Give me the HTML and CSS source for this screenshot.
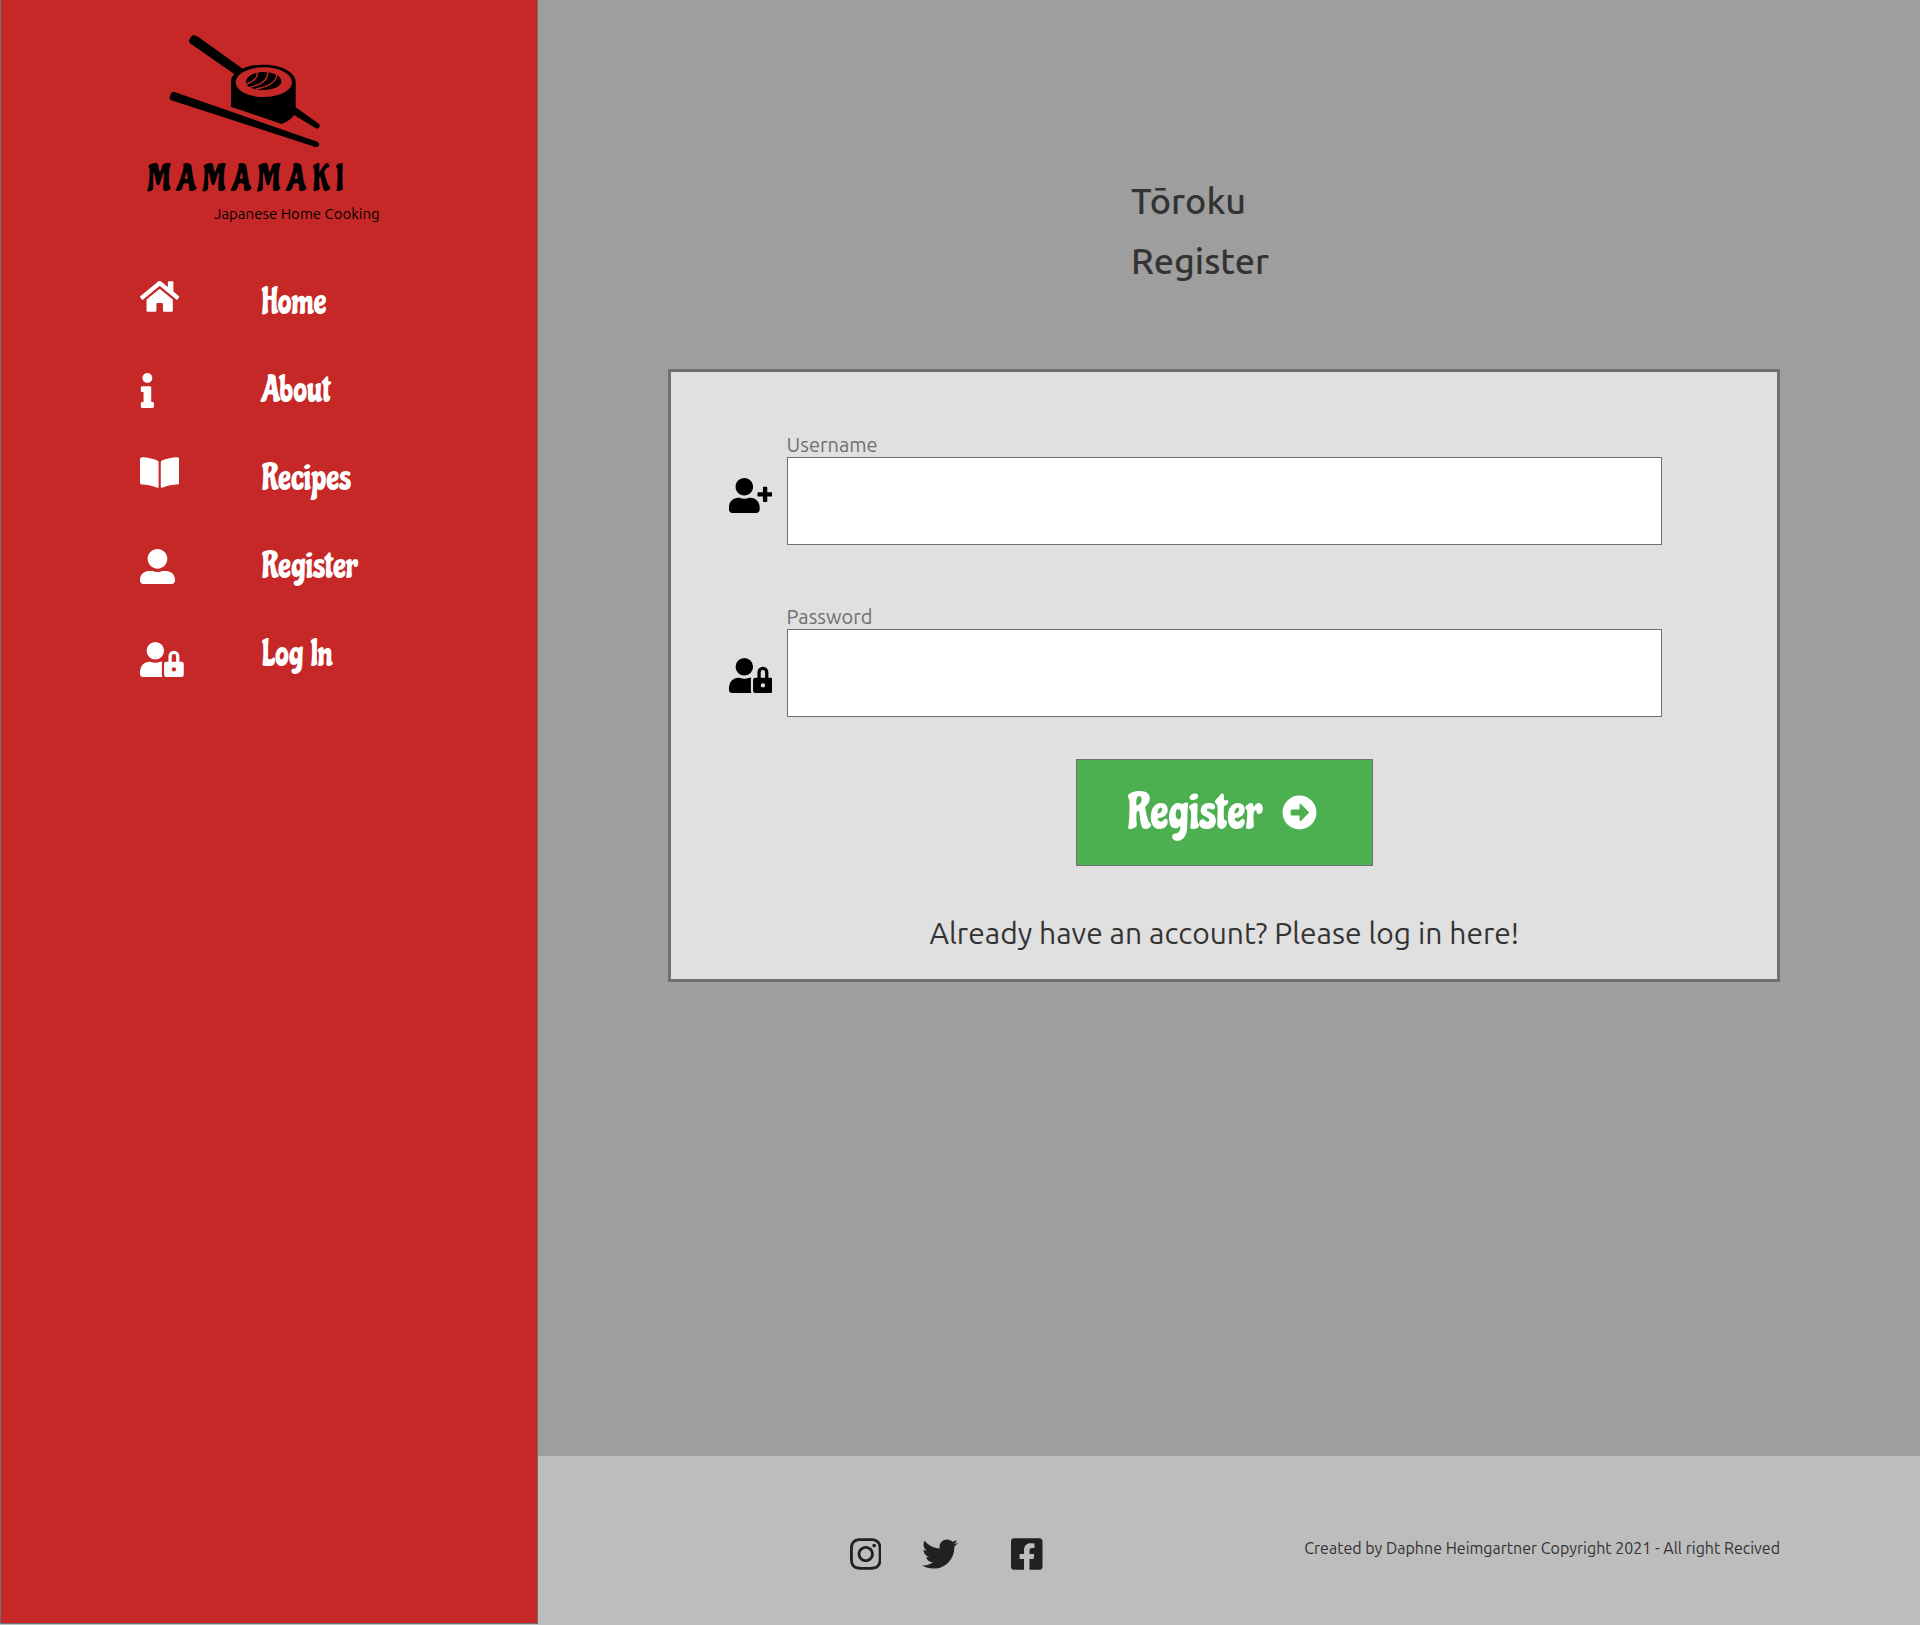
FILE: index.html
```html
<!DOCTYPE html>
<html lang="en">
<head>
<meta charset="utf-8">
<meta name="viewport" content="width=device-width, initial-scale=1">
<title>Mamamaki – Register</title>
<link rel="stylesheet" href="styles.css">
</head>
<body>
<div class="layout">
  <aside class="sidebar">
    <a class="brand" href="#">
      <svg class="brand-mark" viewBox="117 42 456 342" aria-hidden="true">
        <path d="M193 46Q187 44 183 50L178 60Q175 66 180 70L318 166L340 148L204 50Z"/>
        <path d="M497 262L566 311Q572 316 568 322Q563 328 556 324L486 281Z"/>
        <path d="M133 216Q126 214 123 220L119 231Q117 238 124 241L556 381Q564 383 567 376Q569 368 562 365Z"/>
        <path fill-rule="evenodd" d="M303 186C303 156 346 134 400 134S497 156 497 186V280Q482 302 455 312L303 260ZM317 187C317 212 354 231 401 231S486 212 486 187S448 142 401 142S317 162 317 187Z"/>
        <path d="M348 187C348 168 372 156 401 156S454 168 454 184S430 210 401 210S348 202 348 187Z"/>
        <g class="brand-grain">
          <path d="M381 154Q387 180 346 194"/>
          <path d="M413 154Q418 190 356 203"/>
          <path d="M440 160Q444 194 378 207"/>
        </g>
      </svg>
      <span class="brand-name">MAMAMAKI</span>
      <span class="brand-tagline">Japanese Home Cooking</span>
    </a>
    <nav>
      <ul class="nav-list">
        <li><a class="nav-link" href="#">
          <svg class="icon icon-top" viewBox="0 0 576 512" aria-hidden="true"><path d="M280.37 148.26L96 300.11V464a16 16 0 0 0 16 16l112.06-.29a16 16 0 0 0 15.92-16V368a16 16 0 0 1 16-16h64a16 16 0 0 1 16 16v95.64a16 16 0 0 0 16 16.05L464 480a16 16 0 0 0 16-16V300L295.67 148.26a12.19 12.19 0 0 0-15.3 0zM571.6 251.47L488 182.56V44.05a12 12 0 0 0-12-12h-56a12 12 0 0 0-12 12v72.61L318.47 43a48 48 0 0 0-61 0L4.34 251.47a12 12 0 0 0-1.6 16.9l25.5 31A12 12 0 0 0 45.15 301l235.22-193.74a12.19 12.19 0 0 1 15.3 0L530.9 301a12 12 0 0 0 16.9-1.6l25.5-31a12 12 0 0 0-1.7-16.93z"/></svg>
          <span>Home</span></a></li>
        <li><a class="nav-link" href="#">
          <svg class="icon" viewBox="-12 0 204 512" aria-hidden="true"><path d="M20 424.229h20V279.771H20c-11.046 0-20-8.954-20-20V212c0-11.046 8.954-20 20-20h112c11.046 0 20 8.954 20 20v212.229h20c11.046 0 20 8.954 20 20V492c0 11.046-8.954 20-20 20H20c-11.046 0-20-8.954-20-20v-47.771c0-11.046 8.954-20 20-20zM96 0C56.235 0 24 32.235 24 72s32.235 72 72 72 72-32.235 72-72S135.764 0 96 0z"/></svg>
          <span>About</span></a></li>
        <li><a class="nav-link" href="#">
          <svg class="icon icon-top" viewBox="0 0 576 512" aria-hidden="true"><path d="M542.22 32.05c-54.8 3.11-163.72 14.43-230.96 55.59-4.64 2.84-7.27 7.89-7.27 13.17v363.87c0 11.55 12.63 18.85 23.28 13.49 69.18-34.82 169.23-44.32 218.7-46.92 16.89-.89 30.02-14.43 30.02-30.66V62.75c.01-17.71-15.35-31.74-33.77-30.7zM264.73 87.64C197.5 46.48 88.58 35.17 33.78 32.05 15.36 31.01 0 45.04 0 62.75V400.6c0 16.24 13.13 29.78 30.02 30.66 49.49 2.6 149.59 12.11 218.77 46.95 10.62 5.35 23.21-1.94 23.21-13.46V100.63c0-5.29-2.62-10.14-7.27-12.99z"/></svg>
          <span>Recipes</span></a></li>
        <li><a class="nav-link" href="#">
          <svg class="icon" viewBox="0 0 512 512" aria-hidden="true"><path d="M256 288c79.5 0 144-64.5 144-144S335.5 0 256 0 112 64.5 112 144s64.5 144 144 144zm128 32h-55.1c-22.2 10.2-46.9 16-72.9 16s-50.6-5.8-72.9-16H128C57.3 320 0 377.3 0 448v16c0 26.5 21.5 48 48 48h416c26.5 0 48-21.5 48-48v-16c0-70.7-57.3-128-128-128z"/></svg>
          <span>Register</span></a></li>
        <li><a class="nav-link" href="#">
          <svg class="icon icon-bottom" viewBox="0 0 640 512" aria-hidden="true"><path d="M224 256A128 128 0 1 0 96 128a128 128 0 0 0 128 128zm96 64a63.08 63.08 0 0 1 8.1-30.5c-4.8-.5-9.5-1.5-14.5-1.5h-16.7a174.08 174.08 0 0 1-145.8 0h-16.7A134.43 134.43 0 0 0 0 422.4V464a48 48 0 0 0 48 48h280.9a63.54 63.54 0 0 1-8.9-32zm288-32h-32v-80a80 80 0 0 0-160 0v80h-32a32 32 0 0 0-32 32v160a32 32 0 0 0 32 32h224a32 32 0 0 0 32-32V320a32 32 0 0 0-32-32zM496 432a32 32 0 1 1 32-32 32 32 0 0 1-32 32zm32-144h-64v-80a32 32 0 0 1 64 0z"/></svg>
          <span>Log In</span></a></li>
      </ul>
    </nav>
  </aside>

  <div class="page">
    <main class="content">
      <h1 class="title"><span>Tōroku</span><span>Register</span></h1>
      <form class="card">
        <div class="field">
          <label class="field-label" for="username">Username</label>
          <svg class="icon field-icon icon-top" viewBox="0 0 640 512" aria-hidden="true"><path d="M624 208h-64v-64c0-8.8-7.2-16-16-16h-32c-8.8 0-16 7.2-16 16v64h-64c-8.8 0-16 7.2-16 16v32c0 8.8 7.2 16 16 16h64v64c0 8.8 7.2 16 16 16h32c8.8 0 16-7.2 16-16v-64h64c8.8 0 16-7.2 16-16v-32c0-8.8-7.2-16-16-16zm-400 48c70.7 0 128-57.3 128-128S294.7 0 224 0 96 57.3 96 128s57.3 128 128 128zm89.6 32h-16.7c-22.2 10.2-46.9 16-72.9 16s-50.6-5.8-72.9-16h-16.7C60.2 288 0 348.2 0 422.4V464c0 26.5 21.5 48 48 48h352c26.5 0 48-21.5 48-48v-41.6c0-74.2-60.2-134.4-134.4-134.4z"/></svg>
          <input class="field-input" id="username" type="text" autocomplete="username">
        </div>
        <div class="field">
          <label class="field-label" for="password">Password</label>
          <svg class="icon field-icon icon-bottom" viewBox="0 0 640 512" aria-hidden="true"><path d="M224 256A128 128 0 1 0 96 128a128 128 0 0 0 128 128zm96 64a63.08 63.08 0 0 1 8.1-30.5c-4.8-.5-9.5-1.5-14.5-1.5h-16.7a174.08 174.08 0 0 1-145.8 0h-16.7A134.43 134.43 0 0 0 0 422.4V464a48 48 0 0 0 48 48h280.9a63.54 63.54 0 0 1-8.9-32zm288-32h-32v-80a80 80 0 0 0-160 0v80h-32a32 32 0 0 0-32 32v160a32 32 0 0 0 32 32h224a32 32 0 0 0 32-32V320a32 32 0 0 0-32-32zM496 432a32 32 0 1 1 32-32 32 32 0 0 1-32 32zm32-144h-64v-80a32 32 0 0 1 64 0z"/></svg>
          <input class="field-input" id="password" type="password" autocomplete="new-password">
        </div>
        <button class="submit" type="submit">
          <span>Register</span>
          <svg class="icon" viewBox="0 0 512 512" aria-hidden="true"><path d="M256 8c137 0 248 111 248 248S393 504 256 504 8 393 8 256 119 8 256 8zM140 300h116v70.9c0 10.7 13 16.1 20.5 8.5l114.3-114.9c4.7-4.7 4.7-12.2 0-16.9l-114.3-115c-7.6-7.6-20.5-2.2-20.5 8.5V212H140c-6.6 0-12 5.4-12 12v64c0 6.6 5.4 12 12 12z"/></svg>
        </button>
        <a class="login-link" href="#">Already have an account? Please log in here!</a>
      </form>
    </main>

    <footer class="footer">
      <div class="social">
        <a href="#" aria-label="Instagram"><svg viewBox="0 0 448 512" aria-hidden="true"><path d="M224.1 141c-63.6 0-114.9 51.3-114.9 114.9s51.3 114.9 114.9 114.9S339 319.5 339 255.9 287.7 141 224.1 141zm0 189.6c-41.1 0-74.7-33.5-74.7-74.7s33.5-74.7 74.7-74.7 74.7 33.5 74.7 74.7-33.6 74.7-74.7 74.7zm146.4-194.3c0 14.9-12 26.8-26.8 26.8-14.9 0-26.8-12-26.8-26.8s12-26.8 26.8-26.8 26.8 12 26.8 26.8zm76.1 27.2c-1.7-35.9-9.9-67.7-36.2-93.9-26.2-26.2-58-34.4-93.9-36.2-37-2.1-147.9-2.1-184.9 0-35.8 1.7-67.6 9.9-93.9 36.1s-34.4 58-36.2 93.9c-2.1 37-2.1 147.9 0 184.9 1.7 35.9 9.9 67.7 36.2 93.9s58 34.4 93.9 36.2c37 2.1 147.9 2.1 184.9 0 35.9-1.7 67.7-9.9 93.9-36.2 26.2-26.2 34.4-58 36.2-93.9 2.1-37 2.1-147.8 0-184.8zM398.8 388c-7.8 19.6-22.9 34.7-42.6 42.6-29.5 11.7-99.5 9-132.1 9s-102.7 2.6-132.1-9c-19.6-7.8-34.7-22.9-42.6-42.6-11.7-29.5-9-99.5-9-132.1s-2.6-102.7 9-132.1c7.8-19.6 22.9-34.7 42.6-42.6 29.5-11.7 99.5-9 132.1-9s102.7-2.6 132.1 9c19.6 7.8 34.7 22.9 42.6 42.6 11.7 29.5 9 99.5 9 132.1s2.7 102.7-9 132.1z"/></svg></a>
        <a href="#" aria-label="Twitter"><svg viewBox="0 0 512 512" aria-hidden="true"><path d="M459.37 151.716c.325 4.548.325 9.097.325 13.645 0 138.72-105.583 298.558-298.558 298.558-59.452 0-114.68-17.219-161.137-47.106 8.447.974 16.568 1.299 25.34 1.299 49.055 0 94.213-16.568 130.274-44.832-46.132-.975-84.792-31.188-98.112-72.772 6.498.974 12.995 1.624 19.818 1.624 9.421 0 18.843-1.3 27.614-3.573-48.081-9.747-84.143-51.98-84.143-102.985v-1.299c13.969 7.797 30.214 12.67 47.431 13.319-28.264-18.843-46.781-51.005-46.781-87.391 0-19.492 5.197-37.36 14.294-52.954 51.655 63.675 129.3 105.258 216.365 109.807-1.624-7.797-2.599-15.918-2.599-24.04 0-57.828 46.782-104.934 104.934-104.934 30.213 0 57.502 12.67 76.67 33.137 23.715-4.548 46.456-13.32 66.599-25.34-7.798 24.366-24.366 44.833-46.132 57.827 21.117-2.273 41.584-8.122 60.426-16.243-14.292 20.791-32.161 39.308-52.628 54.253z"/></svg></a>
        <a class="social-last" href="#" aria-label="Facebook"><svg viewBox="0 0 448 512" aria-hidden="true"><path d="M400 32H48A48 48 0 0 0 0 80v352a48 48 0 0 0 48 48h137.25V327.69h-63V256h63v-54.64c0-62.15 37-96.48 93.67-96.48 27.14 0 55.52 4.84 55.52 4.84v61h-31.27c-30.81 0-40.42 19.12-40.42 38.73V256h68.78l-11 71.69h-57.78V480H400a48 48 0 0 0 48-48V80a48 48 0 0 0-48-48z"/></svg></a>
      </div>
      <p class="credit">Created by Daphne Heimgartner Copyright 2021 - All right Recived</p>
    </footer>
  </div>
</div>
</body>
</html>
```
FILE: styles.css
```css
:root {
  --body-font: Ubuntu, "Noto Sans", sans-serif;
  --display-font: Chicle, "Roboto Condensed", sans-serif;
  --line: #707070;
}

* {
  box-sizing: border-box;
}

body {
  margin: 0;
  background: #bdbdbd;
  color: #333;
  font-family: var(--body-font);
  font-size: 16px;
}

a {
  color: inherit;
  text-decoration: none;
}

svg {
  display: block;
  fill: currentColor;
}

.layout {
  display: grid;
  grid-template-columns: 28% 1fr;
  min-height: 100vh;
}

/* Sidebar */
.sidebar {
  margin-bottom: 1px;
  padding: 34px 0 34px 139px;
  border: 1px solid var(--line);
  border-top: 0;
  background: #c62828;
  color: #fff;
}

.brand {
  display: block;
  color: #000;
}

.brand-mark {
  width: 152px;
  height: 114px;
  margin-left: 29px;
}

.brand-grain {
  fill: none;
  stroke: #c62828;
  stroke-width: 4;
}

.brand-name,
.brand-tagline {
  display: block;
  white-space: nowrap;
}

.brand-name {
  margin: 11px 0 0 8px;
  font: 36px/40px var(--display-font);
  letter-spacing: 7px;
}

.brand-tagline {
  margin-left: 74px;
  font-size: 15px;
  line-height: 30px;
}

.nav-list {
  display: grid;
  gap: 42px;
  margin: 50px 0 0;
  padding: 0;
  list-style: none;
}

.nav-link {
  display: grid;
  grid-template-columns: 122px 1fr;
  align-items: center;
  font: 35px/46px var(--display-font);
}

.icon {
  height: 35px;
}

.icon-top {
  align-self: start;
}

.icon-bottom {
  align-self: end;
}

/* Main column */
.page {
  display: flex;
  flex-direction: column;
}

.content {
  flex: 1;
  padding: 171px 140px 80px 130px;
  background: #9e9e9e;
}

.title {
  margin: 0 0 78px;
  padding-left: calc(100% * 5 / 12);
  font-size: 36px;
  font-weight: 500;
  line-height: 60px;
}

.title span {
  display: block;
}

.card {
  display: flex;
  flex-direction: column;
  align-items: center;
  padding: 61px 115px 26px 58px;
  border: 3px solid var(--line);
  background: #e0e0e0;
}

.field {
  display: grid;
  grid-template-columns: 44px 1fr;
  column-gap: 14px;
  align-self: stretch;
}

.field + .field {
  margin-top: 60px;
}

.field-label {
  grid-column: 2;
  color: var(--line);
  font-size: 20px;
  line-height: 24px;
}

.field-icon {
  margin: 21px 0 24px;
  color: #000;
}

.field-input {
  width: 100%;
  height: 88px;
  padding: 0 24px;
  border: 1px solid var(--line);
  border-radius: 0;
  background: #fff;
  font: 24px var(--body-font);
}

.submit,
.login-link {
  margin-left: 58px;
}

.submit {
  display: flex;
  align-items: center;
  justify-content: center;
  gap: 20px;
  width: 297px;
  height: 107px;
  margin-top: 42px;
  padding: 0 4px 0 0;
  border: 1px solid var(--line);
  background: #4caf50;
  color: #fff;
  font: 49px/60px var(--display-font);
  cursor: pointer;
}

.login-link {
  margin-top: 47px;
  font-size: 30px;
  line-height: 40px;
}

/* Footer */
.footer {
  display: flex;
  align-items: flex-start;
  justify-content: space-between;
  padding: 80px 140px 53px 312px;
  background: #bdbdbd;
}

.social {
  display: flex;
  gap: 41px;
  color: #212121;
}

.social svg {
  height: 36px;
}

.social-last {
  margin-left: 12px;
}

.credit {
  margin: 0;
  font-size: 16px;
  line-height: 24px;
}
```
